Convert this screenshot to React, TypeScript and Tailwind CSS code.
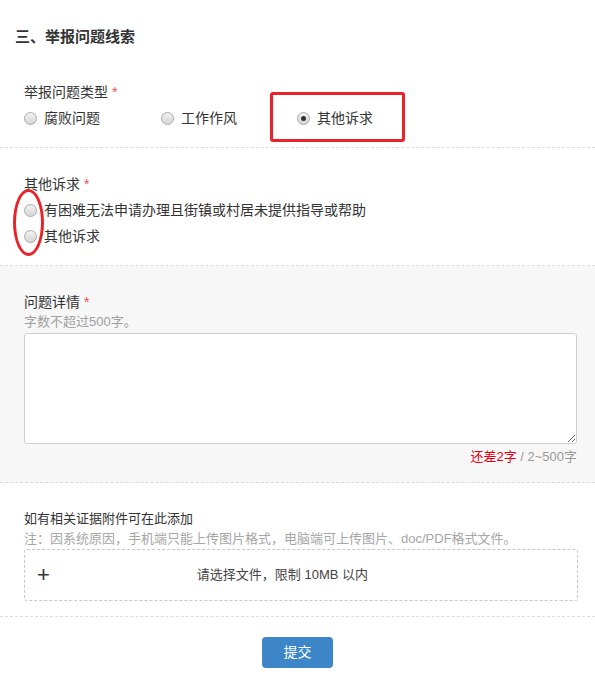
import React from 'react';

function Radio({ checked = false }: { checked?: boolean }) {
  return (
    <span className="flex h-[13px] w-[13px] shrink-0 items-center justify-center rounded-full border border-[#a9a9a9] bg-gradient-to-b from-[#f2f2f2] to-[#d6d6d6]">
      {checked && <span className="h-[5px] w-[5px] rounded-full bg-[#333]" />}
    </span>
  );
}

function Required() {
  return <span className="ml-[4px] text-[#f05050]">*</span>;
}

export default function App() {
  return (
    <div className="min-h-[685px] w-[595px] bg-white font-['Liberation_Sans','Noto_Sans_CJK_SC',sans-serif] text-[#333]">
      {/* Title */}
      <div className="px-[15px] pt-[27px] pb-[25px]">
        <h2 className="text-[15px] font-bold leading-[20px]">三、举报问题线索</h2>
      </div>

      {/* 举报问题类型 */}
      <div className="border-b border-dashed border-[#dcdcdc] px-[24px] pt-[10px] pb-[19px]">
        <p className="text-[14px] leading-[20px]">
          举报问题类型<Required />
        </p>
        <div className="mt-[6px] flex text-[14px] leading-[20px]">
          <label className="flex w-[137px] items-center gap-[7px]">
            <Radio />
            <span>腐败问题</span>
          </label>
          <label className="flex w-[136px] items-center gap-[7px]">
            <Radio />
            <span>工作作风</span>
          </label>
          <label className="relative flex items-center gap-[7px]">
            <Radio checked />
            <span>其他诉求</span>
            <span className="absolute -left-[27px] -top-[16px] h-[50px] w-[135px] rounded-[3px] border-[3px] border-[#e8242a]" />
          </label>
        </div>
      </div>

      {/* 其他诉求 */}
      <div className="border-b border-dashed border-[#dcdcdc] px-[24px] pt-[26px] pb-[19px]">
        <p className="text-[14px] leading-[20px]">
          其他诉求<Required />
        </p>
        <div className="relative mt-[6px] flex flex-col gap-[6px] text-[14px] leading-[20px]">
          <label className="flex items-center gap-[7px]">
            <Radio />
            <span>有困难无法申请办理且街镇或村居未提供指导或帮助</span>
          </label>
          <label className="flex items-center gap-[7px]">
            <Radio />
            <span>其他诉求</span>
          </label>
          <span className="absolute -left-[11px] -top-[11px] h-[67px] w-[31px] rounded-[50%] border-[3px] border-[#e8242a]" />
        </div>
      </div>

      {/* 问题详情 */}
      <div className="border-b border-dashed border-[#dcdcdc] bg-[#f7f7f7] pl-[24px] pr-[18px] pt-[26px] pb-[15px]">
        <p className="text-[14px] leading-[20px]">
          问题详情<Required />
        </p>
        <p className="text-[13px] leading-[20px] text-[#a0a0a0]">字数不超过500字。</p>
        <textarea className="mt-[1px] block h-[111px] w-full rounded-[3px] border border-[#cfcfcf] bg-white outline-none" />
        <p className="mt-[3px] text-right text-[13px] leading-[20px] text-[#999]">
          <span className="text-[#e60012]">还差2字</span> / 2~500字
        </p>
      </div>

      {/* 附件 */}
      <div className="border-b border-dashed border-[#dcdcdc] pl-[24px] pr-[17px] pt-[26px] pb-[15px]">
        <p className="text-[13px] leading-[20px]">如有相关证据附件可在此添加</p>
        <p className="text-[13px] leading-[20px] text-[#a6a6a6]">
          注：因系统原因，手机端只能上传图片格式，电脑端可上传图片、doc/PDF格式文件。
        </p>
        <div className="flex h-[52px] items-center rounded-[3px] border border-dashed border-[#c8c8c8] pl-[12px]">
          <span className="text-[22px] leading-none text-[#333]">+</span>
          <span className="flex-1 pr-[62px] text-center text-[13px] text-[#444]">请选择文件，限制 10MB 以内</span>
        </div>
      </div>

      {/* Submit */}
      <div className="flex justify-center pt-[20px] pb-[16px]">
        <button className="h-[31px] w-[71px] rounded-[4px] bg-[#3d86c8] text-[14px] text-white">提交</button>
      </div>
    </div>
  );
}
